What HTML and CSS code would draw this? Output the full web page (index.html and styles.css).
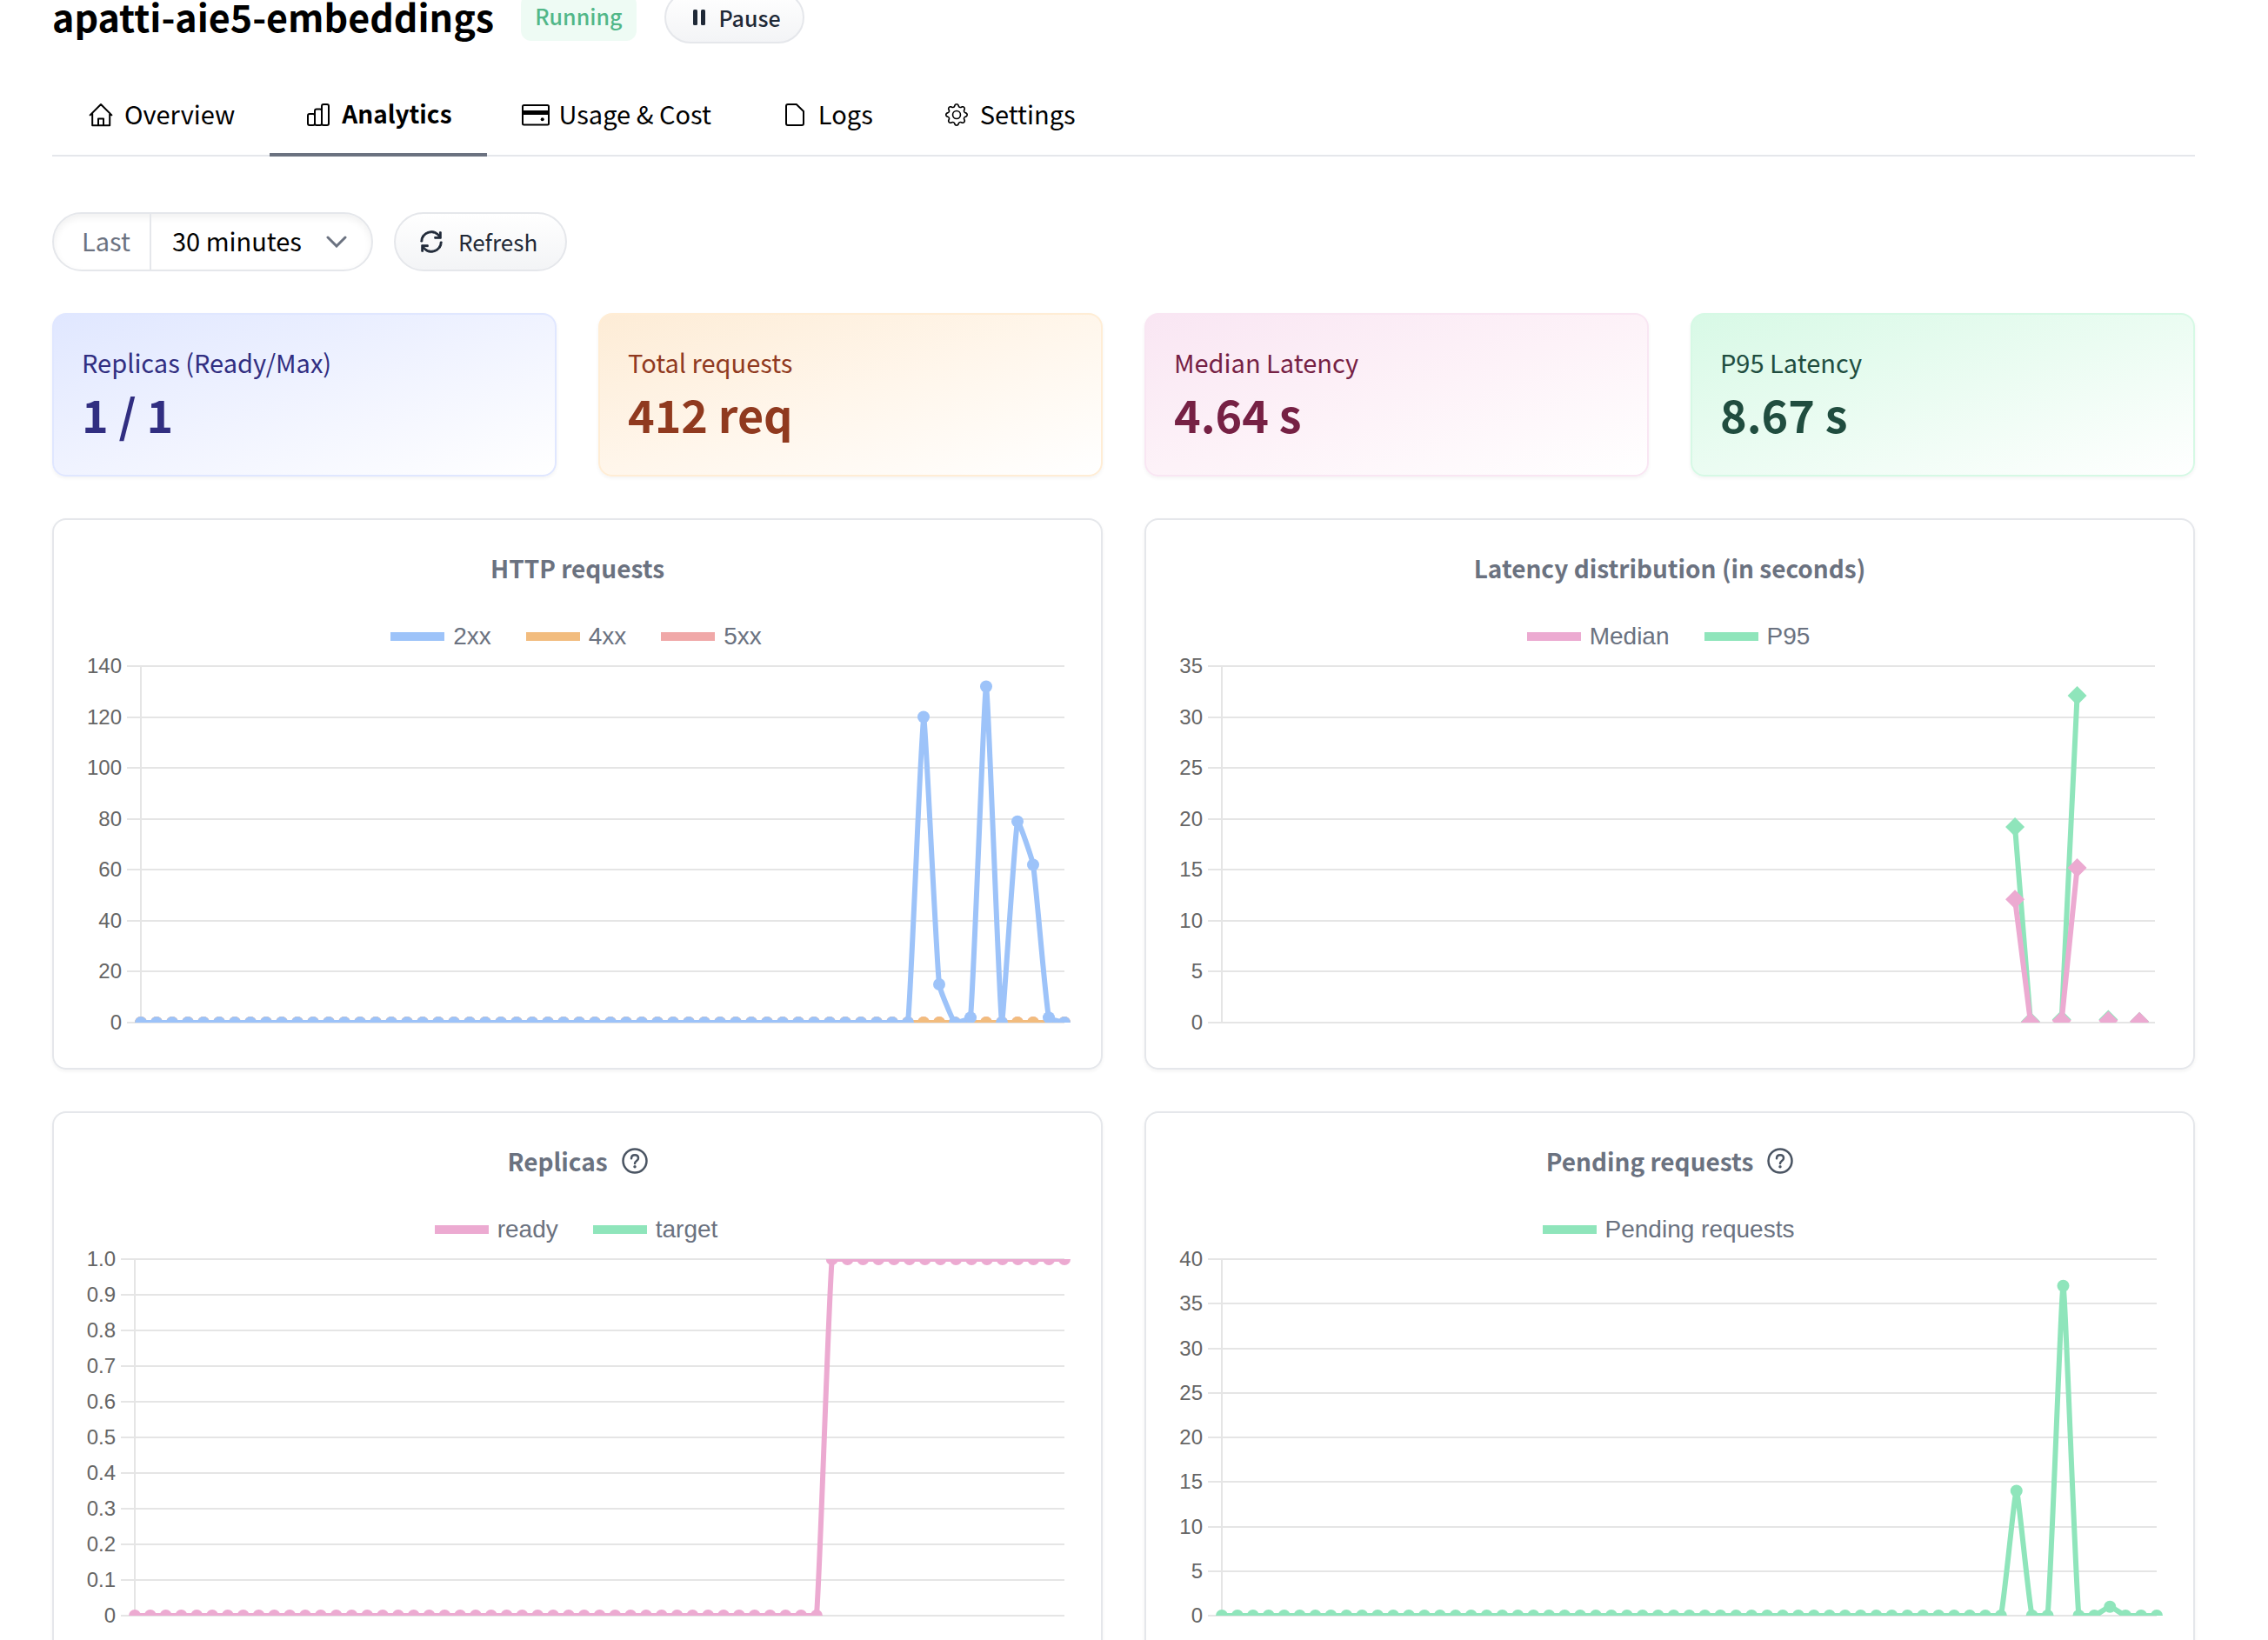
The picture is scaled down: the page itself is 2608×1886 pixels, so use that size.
FILE: index.html
```html
<!DOCTYPE html>
<html lang="en">
<head>
<meta charset="utf-8">
<meta name="viewport" content="width=device-width, initial-scale=1">
<title>apatti-aie5-embeddings · Analytics</title>
<link rel="stylesheet" href="styles.css">
</head>
<body>
<main class="page">
  <header class="header">
    <h1 class="header-title">apatti-aie5-embeddings</h1>
    <span class="badge">Running</span>
    <button class="btn btn-small" type="button">
      <svg class="icon-pause" viewBox="0 0 14 18" aria-hidden="true"><rect width="5" height="18" rx="1.5"/><rect x="9" width="5" height="18" rx="1.5"/></svg>
      Pause
    </button>
  </header>

  <nav class="tabs" aria-label="Endpoint sections">
    <a class="tab" href="#overview">
      <svg class="icon" viewBox="0 0 32 32" aria-hidden="true"><path d="M3.6 16.4 16 4l12.4 12.4M6.2 14v14.2h20V14M13 28v-7.4h6V28"/></svg>
      Overview
    </a>
    <a class="tab tab-active" href="#analytics" aria-current="page">
      <svg class="icon" viewBox="0 0 32 32" aria-hidden="true"><rect x="4" y="15" width="8" height="13" rx="2"/><rect x="12" y="9.5" width="8" height="18.5" rx="2"/><rect x="20" y="4" width="8" height="24" rx="2"/></svg>
      Analytics
    </a>
    <a class="tab" href="#usage">
      <svg class="icon" viewBox="0 0 32 32" aria-hidden="true"><rect x="1" y="5" width="30" height="22.500" rx="1.500"/><path class="fill" d="M1 11h30v5H1z"/><circle class="fill" cx="23.700" cy="21.200" r="2"/></svg>
      Usage &amp; Cost
    </a>
    <a class="tab" href="#logs">
      <svg class="icon" viewBox="0 0 32 32" aria-hidden="true"><path d="M8 4h9.800l8.200 8v14a2 2 0 0 1-2 2H8a2 2 0 0 1-2-2V6a2 2 0 0 1 2-2z"/></svg>
      Logs
    </a>
    <a class="tab" href="#settings">
      <svg class="icon" viewBox="0 0 32 32" aria-hidden="true"><g class="fill" transform="translate(3 3) scale(1.625)"><path d="M8 4.754a3.246 3.246 0 1 0 0 6.492 3.246 3.246 0 0 0 0-6.492zM5.754 8a2.246 2.246 0 1 1 4.492 0 2.246 2.246 0 0 1-4.492 0z"/><path d="M9.796 1.343c-.527-1.79-3.065-1.79-3.592 0l-.094.319a.873.873 0 0 1-1.255.52l-.292-.16c-1.64-.892-3.433.902-2.54 2.541l.159.292a.873.873 0 0 1-.52 1.255l-.319.094c-1.79.527-1.79 3.065 0 3.592l.319.094a.873.873 0 0 1 .52 1.255l-.16.292c-.892 1.64.901 3.434 2.541 2.54l.292-.159a.873.873 0 0 1 1.255.52l.094.319c.527 1.79 3.065 1.79 3.592 0l.094-.319a.873.873 0 0 1 1.255-.52l.292.16c1.64.893 3.434-.902 2.54-2.541l-.159-.292a.873.873 0 0 1 .52-1.255l.319-.094c1.79-.527 1.79-3.065 0-3.592l-.319-.094a.873.873 0 0 1-.52-1.255l.16-.292c.893-1.64-.902-3.433-2.541-2.54l-.292.159a.873.873 0 0 1-1.255-.52l-.094-.319zm-2.633.283c.246-.835 1.428-.835 1.674 0l.094.319a1.873 1.873 0 0 0 2.693 1.115l.291-.16c.764-.415 1.6.42 1.184 1.185l-.159.292a1.873 1.873 0 0 0 1.116 2.692l.318.094c.835.246.835 1.428 0 1.674l-.319.094a1.873 1.873 0 0 0-1.115 2.693l.16.291c.415.764-.42 1.6-1.185 1.184l-.291-.159a1.873 1.873 0 0 0-2.693 1.116l-.094.318c-.246.835-1.428.835-1.674 0l-.094-.319a1.873 1.873 0 0 0-2.692-1.115l-.292.16c-.764.415-1.6-.42-1.184-1.185l.159-.291A1.873 1.873 0 0 0 1.945 8.93l-.319-.094c-.835-.246-.835-1.428 0-1.674l.319-.094A1.873 1.873 0 0 0 3.06 4.377l-.16-.292c-.415-.764.42-1.6 1.185-1.184l.292.159a1.873 1.873 0 0 0 2.692-1.115l.094-.319z"/></g></svg>
      Settings
    </a>
  </nav>

  <div class="controls">
    <div class="range">
      <label class="range-label" for="range">Last</label>
      <div class="range-field">
        <select class="range-select" id="range">
          <option>30 minutes</option>
          <option>1 hour</option>
          <option>6 hours</option>
          <option>1 day</option>
        </select>
        <svg class="range-chevron" viewBox="0 0 24 14" aria-hidden="true"><path d="m2 2 10 10L22 2"/></svg>
      </div>
    </div>
    <button class="btn" type="button">
      <svg class="icon-refresh" viewBox="0 0 32 32" aria-hidden="true"><path transform="matrix(-1 0 0 1 32 0)" d="M12 10H6.780A11 11 0 0 1 27 16h2A13 13 0 0 0 6 7.680V4H4v8h8zm8 12h5.220A11 11 0 0 1 5 16H3a13 13 0 0 0 23 8.320V28h2v-8h-8z"/></svg>
      Refresh
    </button>
  </div>

  <section class="stats" aria-label="Summary">
    <div class="stat stat-indigo"><div class="stat-label">Replicas (Ready/Max)</div><div class="stat-value">1 / 1</div></div>
    <div class="stat stat-orange"><div class="stat-label">Total requests</div><div class="stat-value">412 req</div></div>
    <div class="stat stat-pink"><div class="stat-label">Median Latency</div><div class="stat-value">4.64 s</div></div>
    <div class="stat stat-green"><div class="stat-label">P95 Latency</div><div class="stat-value">8.67 s</div></div>
  </section>

  <section class="charts" aria-label="Charts">
    <article class="chart">
      <h2 class="chart-title">HTTP requests</h2>
      <ul class="legend">
        <li class="legend-item"><span class="swatch swatch-blue"></span>2xx</li>
        <li class="legend-item"><span class="swatch swatch-orange"></span>4xx</li>
        <li class="legend-item"><span class="swatch swatch-red"></span>5xx</li>
      </ul>
      <svg class="plot" data-chart="http" role="img" aria-label="HTTP requests over time"></svg>
    </article>
    <article class="chart">
      <h2 class="chart-title">Latency distribution (in seconds)</h2>
      <ul class="legend">
        <li class="legend-item"><span class="swatch swatch-pink"></span>Median</li>
        <li class="legend-item"><span class="swatch swatch-green"></span>P95</li>
      </ul>
      <svg class="plot" data-chart="latency" role="img" aria-label="Latency over time"></svg>
    </article>
    <article class="chart">
      <h2 class="chart-title">Replicas
        <svg class="icon-help" viewBox="0 0 30 30" aria-hidden="true"><circle cx="15" cy="15" r="13.500"/><path d="M11 12.200c0-2.400 1.700-4 4-4s4 1.500 4 3.700c0 3-4 3-4 6"/><circle class="fill" cx="15" cy="21.800" r="1.700"/></svg>
      </h2>
      <ul class="legend">
        <li class="legend-item"><span class="swatch swatch-pink"></span>ready</li>
        <li class="legend-item"><span class="swatch swatch-green"></span>target</li>
      </ul>
      <svg class="plot" data-chart="replicas" role="img" aria-label="Replicas over time"></svg>
    </article>
    <article class="chart">
      <h2 class="chart-title">Pending requests
        <svg class="icon-help" viewBox="0 0 30 30" aria-hidden="true"><circle cx="15" cy="15" r="13.500"/><path d="M11 12.200c0-2.400 1.700-4 4-4s4 1.500 4 3.700c0 3-4 3-4 6"/><circle class="fill" cx="15" cy="21.800" r="1.700"/></svg>
      </h2>
      <ul class="legend">
        <li class="legend-item"><span class="swatch swatch-green"></span>Pending requests</li>
      </ul>
      <svg class="plot" data-chart="pending" role="img" aria-label="Pending requests over time"></svg>
    </article>
  </section>
</main>
<script src="charts.js"></script>
</body>
</html>
```
FILE: styles.css
```css
*, *::before, *::after { box-sizing: border-box; }

body {
  margin: 0;
  height: 100vh;
  overflow: hidden;
  background: #fff;
  color: #000;
  font-family: "Noto Sans CJK SC", "Noto Sans", sans-serif;
  font-size: 29px;
  line-height: 32px;
}

h1, h2, ul { margin: 0; padding: 0; }
button, select { font: inherit; color: inherit; }

/* The header is scrolled partly past the top edge */
.page { margin-top: -10px; padding: 0 84px 48px 60px; }

.header { display: flex; align-items: center; height: 60px; }
.header-title { padding-bottom: 4px; font-size: 43px; line-height: 36px; font-weight: 700; }
.badge {
  margin-left: 31px;
  padding: 0 16px 4px;
  border-radius: 12px;
  background: #eefbf4;
  color: #52b788;
  font-size: 25px;
  line-height: 50px;
  font-weight: 500;
}

.btn {
  display: inline-flex;
  align-items: center;
  gap: 16px;
  height: 68px;
  padding: 0 32px 0 26px;
  border: 2px solid #e5e7eb;
  border-radius: 34px;
  background: linear-gradient(#fff, #f3f4f6);
  color: #1f2937;
  font-size: 26px;
}
.btn-small { height: 60px; margin-left: 32px; padding: 0 25px 0 31px; font-size: 25px; font-weight: 500; }
.icon-pause { width: 14px; height: 18px; fill: currentColor; }
.icon-refresh { width: 30px; height: 30px; fill: currentColor; stroke: currentColor; stroke-width: 1; }

.tabs { display: flex; margin-top: 34px; box-shadow: inset 0 -2px #e5e7eb; }
.tab {
  display: flex;
  align-items: flex-start;
  gap: 11px;
  padding: 32px 40px 28px;
  border-bottom: 4px solid transparent;
  color: #000;
  line-height: 28px;
  text-decoration: none;
  white-space: nowrap;
}
.tab-active { border-color: #6b7280; font-size: 28px; font-weight: 700; }
.icon { width: 32px; height: 32px; fill: none; stroke: currentColor; stroke-width: 2; stroke-linejoin: round; stroke-linecap: round; }
.fill { fill: currentColor; stroke: none; }

.controls { display: flex; gap: 24px; margin-top: 64px; }
.range {
  display: flex;
  height: 68px;
  border: 2px solid #e5e7eb;
  border-radius: 34px;
  box-shadow: inset 0 4px 8px rgba(0, 0, 0, .06);
}
.range-label { padding: 0 22px 0 32px; border-right: 2px solid #e5e7eb; color: #6b7280; line-height: 60px; }
.range-field { display: grid; align-items: center; }
.range-select {
  grid-area: 1 / 1;
  height: 64px;
  padding: 0 80px 4px 24px;
  border: 0;
  background: transparent;
  color: #000;
  appearance: none;
}
.range-chevron {
  grid-area: 1 / 1;
  justify-self: end;
  width: 24px;
  height: 14px;
  margin-right: 28px;
  fill: none;
  stroke: #6b7280;
  stroke-width: 3;
  stroke-linecap: round;
  pointer-events: none;
}

.stats { display: grid; grid-template-columns: repeat(4, 1fr); gap: 48px; margin-top: 48px; }
.stat {
  padding: 38px 32px;
  border: 2px solid;
  border-radius: 16px;
  box-shadow: 0 2px 4px rgba(0, 0, 0, .05);
}
.stat-value { margin-top: 12px; font-size: 52px; line-height: 64px; font-weight: 700; }
.stat-indigo { border-color: #e0e7ff; color: #312e81; background: linear-gradient(to bottom right, #e0e7ff, #f0f3ff 50%, #fff); }
.stat-orange { border-color: #ffedd5; color: #903a1f; background: linear-gradient(to bottom right, #fdecd6, #fff6eb 50%, #fff); }
.stat-pink { border-color: #f9e6f3; color: #762144; background: linear-gradient(to bottom right, #f9e6f3, #fdf2f8 50%, #fff); }
.stat-green { border-color: #d6f9e5; color: #204d3f; background: linear-gradient(to bottom right, #d8f9e6, #ebfcf2 50%, #fff); }

.charts { display: grid; grid-template-columns: repeat(2, 1fr); gap: 48px; margin-top: 48px; }
.chart {
  min-width: 0;
  padding: 35px 0 28px;
  border: 2px solid #e5e7eb;
  border-radius: 16px;
  box-shadow: 0 2px 4px rgba(0, 0, 0, .05);
}
.chart-title {
  display: flex;
  justify-content: center;
  align-items: center;
  gap: 16px;
  color: #6b7280;
  font-size: 28px;
  line-height: 40px;
  font-weight: 700;
}
.icon-help { width: 30px; height: 30px; fill: none; stroke: #4b5563; stroke-width: 2.5; stroke-linecap: round; }
.icon-help .fill { fill: #4b5563; stroke: none; }

.legend {
  display: flex;
  justify-content: center;
  gap: 40px;
  margin-top: 43px;
  padding-right: 3px;
  list-style: none;
  color: #6b7280;
  font: 28px/32px "Liberation Sans", Arial, sans-serif;
}
.legend-item { display: flex; align-items: center; gap: 10px; }
.swatch { width: 62px; height: 10px; }
.swatch-blue { background: #9dc3f9; }
.swatch-orange { background: #f2bc7e; }
.swatch-red { background: #f0a8a8; }
.swatch-pink { background: #ecaad1; }
.swatch-green { background: #8fe5bb; }

.plot { display: block; width: 100%; height: 452px; overflow: hidden; }
.grid-line { stroke: #e5e5e5; stroke-width: 2; }
.tick-text { fill: #666; font: 24px "Liberation Sans", Arial, sans-serif; text-anchor: end; }
.series-line { fill: none; stroke-width: 6; stroke-linejoin: round; }
```
FILE: charts.js
```js
const BLUE = '#9dc3f9', ORANGE = '#f2bc7e', RED = '#f0a8a8', PINK = '#ecaad1', GREEN = '#8fe5bb';

// A series of n equal values with some of them replaced, by index.
function series(n, base, changes) {
  const values = Array(n).fill(base);
  for (const i in changes) values[i] = changes[i];
  return values;
}

// Series are listed from back to front.
const CHARTS = {
  http: {
    max: 140, step: 20, left: 100, right: 42, digits: 0,
    series: [
      { color: RED, values: series(60, 0, {}) },
      { color: ORANGE, values: series(60, 0, {}) },
      { color: BLUE, values: series(60, 0, { 50: 120, 51: 15, 53: 2, 54: 132, 56: 79, 57: 62, 58: 2 }) }
    ]
  },
  latency: {
    max: 35, step: 5, left: 87, right: 44, digits: 0, diamond: true,
    series: [
      { color: GREEN, values: series(61, null, { 51: 19.2, 52: 0.1, 54: 0.3, 55: 32.1, 57: 0.3, 59: 0.1 }) },
      { color: PINK, values: series(61, null, { 51: 12.1, 52: 0.05, 54: 0.2, 55: 15.2, 57: 0.2, 59: 0.1 }) }
    ]
  },
  replicas: {
    max: 1, step: 0.1, left: 93, right: 42, digits: 1,
    series: [
      { color: PINK, values: Array.from({ length: 61 }, (_, i) => i < 45 ? 0 : 1) }
    ]
  },
  pending: {
    max: 40, step: 5, left: 87, right: 42, digits: 0,
    series: [
      { color: GREEN, values: series(61, 0, { 51: 14, 54: 37, 57: 1 }) }
    ]
  }
};

const TOP = 18, HEIGHT = 410, TENSION = 0.12;

function linePath(points) {
  const clamp = y => Math.max(TOP, Math.min(TOP + HEIGHT, y));
  const handles = points.map((p, i) => {
    if (!p) return null;
    const a = points[i - 1] || p, b = points[i + 1] || p;
    const da = Math.hypot(p.x - a.x, p.y - a.y), db = Math.hypot(b.x - p.x, b.y - p.y);
    const ka = TENSION * da / (da + db || 1), kb = TENSION * db / (da + db || 1);
    return {
      inX: p.x - ka * (b.x - a.x), inY: clamp(p.y - ka * (b.y - a.y)),
      outX: p.x + kb * (b.x - a.x), outY: clamp(p.y + kb * (b.y - a.y))
    };
  });
  let d = '';
  points.forEach((p, i) => {
    if (!p) return;
    if (!points[i - 1]) { d += `M${p.x} ${p.y}`; return; }
    d += `C${handles[i - 1].outX} ${handles[i - 1].outY} ${handles[i].inX} ${handles[i].inY} ${p.x} ${p.y}`;
  });
  return d;
}

function draw(svg) {
  const name = svg.dataset.chart, chart = CHARTS[name];
  const right = svg.clientWidth - chart.right, bottom = TOP + HEIGHT;
  const count = Math.round(chart.max / chart.step);
  let out = `<clipPath id="clip-${name}"><rect x="0" y="${TOP}" width="${svg.clientWidth}" height="${HEIGHT}"/></clipPath>`;

  for (let i = 0; i <= count; i++) {
    const y = Math.round(bottom - HEIGHT * i / count);
    const text = i === 0 ? '0' : (chart.step * i).toFixed(chart.digits);
    out += `<line class="grid-line" x1="${chart.left - 16}" x2="${right}" y1="${y}" y2="${y}"/>`;
    out += `<text class="tick-text" x="${chart.left - 22}" y="${y + 8}">${text}</text>`;
  }
  out += `<line class="grid-line" x1="${chart.left}" x2="${chart.left}" y1="${TOP}" y2="${bottom}"/>`;

  out += `<g clip-path="url(#clip-${name})">`;
  for (const s of chart.series) {
    const points = s.values.map((v, i) => v === null ? null : {
      x: chart.left + (right - chart.left) * i / (s.values.length - 1),
      y: bottom - HEIGHT * v / chart.max
    });
    out += `<path class="series-line" stroke="${s.color}" d="${linePath(points)}"/>`;
    for (const p of points) {
      if (!p) continue;
      out += chart.diamond
        ? `<path fill="${s.color}" d="M${p.x} ${p.y - 11}l11 11-11 11-11-11z"/>`
        : `<circle fill="${s.color}" cx="${p.x}" cy="${p.y}" r="7"/>`;
    }
  }
  svg.innerHTML = out + '</g>';
}

function drawAll() { document.querySelectorAll('.plot').forEach(draw); }
drawAll();
window.addEventListener('resize', drawAll);
```
